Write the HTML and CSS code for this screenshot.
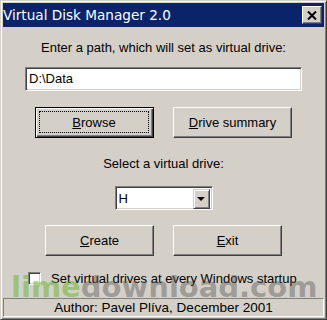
FILE: index.html
```html
<!DOCTYPE html>
<html>
<head>
<meta charset="utf-8">
<link rel="stylesheet" href="styles.css">
</head>
<body>
<div class="window">
  <div class="titlebar">
    <span class="title">Virtual Disk Manager 2.0</span>
    <button class="close" aria-label="Close">
      <svg width="10" height="9" viewBox="0 0 10 9"><path d="M1 0.5 L9 8.5 M9 0.5 L1 8.5" stroke="#000" stroke-width="2" fill="none"/></svg>
    </button>
  </div>
  <div class="client">
    <div class="label first">Enter a path, which will set as virtual drive:</div>
    <div class="field">D:\Data</div>
    <div class="row top">
      <div class="btn wide default"><span class="focus"><u>B</u>rowse</span></div>
      <div class="btn wide"><span><u>D</u>rive summary</span></div>
    </div>
    <div class="label second">Select a virtual drive:</div>
    <div class="combo">
      <span class="combo-value">H</span>
      <span class="combo-btn"><span class="arrow"></span></span>
    </div>
    <div class="row bottom">
      <div class="btn"><span><u>C</u>reate</span></div>
      <div class="btn"><span><u>E</u>xit</span></div>
    </div>
    <div class="check-row">
      <span class="checkbox"></span>
      <span class="check-label">Set virtual drives at every Windows startup</span>
    </div>
  </div>
  <div class="status">Author: Pavel Plíva, December 2001</div>
  <div class="watermark"><span class="wm-lime">lime</span><span class="wm-rest">download.com</span></div>
</div>
</body>
</html>
```

FILE: styles.css
```css
* { box-sizing: border-box; }
html, body { margin: 0; padding: 0; }
body {
  background: #d4d0c8;
  font-family: "Liberation Sans", Arial, sans-serif;
  font-size: 13px;
  color: #000;
}
.window {
  position: relative;
  width: 327px;
  height: 320px;
  background: #d4d0c8;
  border: 1px solid;
  border-color: #d4d0c8 #404040 #404040 #d4d0c8;
  padding: 2px;
  box-shadow: inset 1px 1px #fff, inset -1px -1px #808080;
  display: flex;
  flex-direction: column;
  overflow: hidden;
}
.titlebar {
  height: 24px;
  background: #0a246a;
  display: flex;
  align-items: center;
  justify-content: space-between;
  padding: 0 2px 0 0;
}
.title {
  color: #fff;
  font-family: "DejaVu Sans", Verdana, sans-serif;
  font-size: 13.6px;
  line-height: 16px;
  padding-left: 0;
}
.close {
  width: 20px;
  height: 18px;
  padding: 0;
  margin: 0;
  background: #d4d0c8;
  border: 1px solid;
  border-color: #fff #404040 #404040 #fff;
  box-shadow: inset -1px -1px #808080;
  display: flex;
  align-items: center;
  justify-content: center;
}
.close svg { display: block; }
.client {
  display: flex;
  flex-direction: column;
  align-items: center;
}
.label {
  line-height: 15px;
  height: 15px;
  white-space: nowrap;
}
.label.first { margin-top: 13px; }
.label.second { margin-top: 18px; }
.field {
  margin-top: 12px;
  width: 277px;
  height: 24px;
  background: #fff;
  border: 1px solid;
  border-color: #808080 #fff #fff #808080;
  box-shadow: inset 1px 1px #404040, inset -1px -1px #d4d0c8;
  padding: 0 0 0 3px;
  line-height: 22px;
}
.row {
  display: flex;
  gap: 19px;
}
.row.top { margin-top: 16px; }
.row.bottom { margin-top: 15px; }
.btn {
  width: 109px;
  height: 31px;
  border: 1px solid;
  border-color: #fff #404040 #404040 #fff;
  box-shadow: inset -1px -1px #808080;
  display: flex;
  align-items: center;
  justify-content: center;
  line-height: 15px;
}
.btn.wide { width: 119px; }
.btn.default {
  border: 1px solid #000;
  box-shadow: inset 1px 1px #fff, inset -1px -1px #404040, inset -2px -2px #808080;
}
.btn span { display: block; }
.btn .focus {
  align-self: stretch;
  margin: 3px 4px 4px 3px;
  flex: 1;
  border: 1px dotted #000;
  display: flex;
  align-items: center;
  justify-content: center;
}
.combo {
  margin-top: 15px;
  width: 98px;
  height: 24px;
  background: #fff;
  border: 1px solid;
  border-color: #808080 #fff #fff #808080;
  box-shadow: inset 1px 1px #404040, inset -1px -1px #d4d0c8;
  padding: 2px;
  display: flex;
}
.combo-value {
  flex: 1;
  line-height: 20px;
  padding-left: 1px;
}
.combo-btn {
  width: 17px;
  height: 20px;
  background: #d4d0c8;
  border: 1px solid;
  border-color: #d4d0c8 #404040 #404040 #d4d0c8;
  box-shadow: inset 1px 1px #fff, inset -1px -1px #808080;
  display: flex;
  align-items: center;
  justify-content: center;
}
.arrow {
  width: 0;
  height: 0;
  border-left: 4px solid transparent;
  border-right: 4px solid transparent;
  border-top: 4px solid #000;
}
.check-row {
  align-self: stretch;
  margin-top: 15px;
  padding-left: 25px;
  height: 15px;
  display: flex;
  align-items: center;
  gap: 10px;
}
.checkbox {
  width: 13px;
  height: 13px;
  background: #fff;
  border: 1px solid;
  border-color: #808080 #fff #fff #808080;
  box-shadow: inset 1px 1px #404040, inset -1px -1px #d4d0c8;
}
.check-label { line-height: 15px; white-space: nowrap; }
.status {
  margin-top: 12px;
  height: 19px;
  border: 1px solid;
  border-color: #808080 #fff #fff #808080;
  text-align: center;
  font-size: 13.5px;
  line-height: 17px;
}
.watermark {
  position: absolute;
  left: 10px;
  top: 272px;
  font-family: "DejaVu Sans", sans-serif;
  font-weight: bold;
  font-size: 29px;
  line-height: 29px;
  white-space: nowrap;
  pointer-events: none;
}
.wm-lime { color: rgba(100, 180, 40, 0.5); }
.wm-rest { color: rgba(90, 90, 90, 0.45); }
```
